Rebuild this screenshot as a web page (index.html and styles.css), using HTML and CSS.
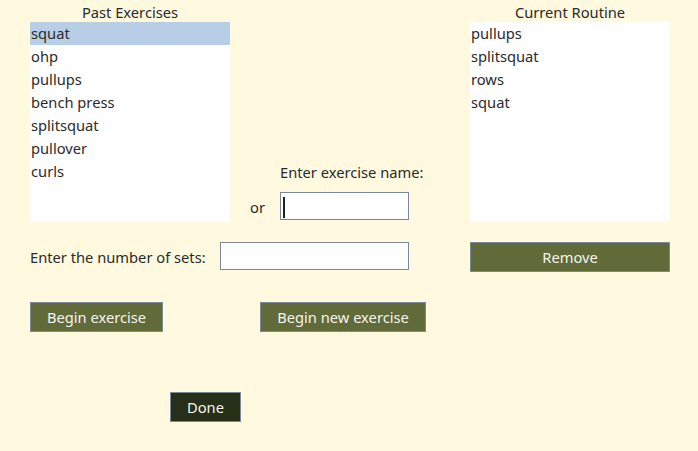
FILE: index.html
```html
<!DOCTYPE html>
<html>
<head>
<meta charset="utf-8">
<link rel="stylesheet" href="styles.css">
</head>
<body>
<div class="app">
  <div class="top">
    <div class="panel">
      <div class="title">Past Exercises</div>
      <ul class="listbox">
        <li class="sel">squat</li>
        <li>ohp</li>
        <li>pullups</li>
        <li>bench press</li>
        <li>splitsquat</li>
        <li>pullover</li>
        <li>curls</li>
      </ul>
    </div>
    <div class="middle">
      <div class="name-label">Enter exercise name:</div>
      <div class="or-row">
        <span class="or">or</span>
        <div class="entry name-entry"><span class="caret"></span></div>
      </div>
    </div>
    <div class="panel">
      <div class="title">Current Routine</div>
      <ul class="listbox">
        <li>pullups</li>
        <li>splitsquat</li>
        <li>rows</li>
        <li>squat</li>
      </ul>
    </div>
  </div>
  <div class="sets-row">
    <span class="sets-label">Enter the number of sets:</span>
    <div class="entry sets-entry"></div>
    <button class="btn remove">Remove</button>
  </div>
  <div class="begin-row">
    <button class="btn begin">Begin exercise</button>
    <button class="btn begin-new">Begin new exercise</button>
  </div>
  <div class="done-row">
    <button class="btn done">Done</button>
  </div>
</div>
</body>
</html>
```
FILE: styles.css
```css
html, body {
  margin: 0;
  padding: 0;
  background: #fef9df;
  height: 100%;
}
body {
  font-family: "Noto Sans", "Open Sans", sans-serif;
  font-size: 14.7px;
  color: #2b2b2b;
}
.app {
  padding-left: 30px;
  width: 640px;
}
.top {
  display: flex;
  height: 222px;
}
.panel {
  width: 200px;
  display: flex;
  flex-direction: column;
}
.title {
  height: 22px;
  line-height: 25px;
  text-align: center;
}
.listbox {
  list-style: none;
  margin: 0;
  padding: 0;
  height: 200px;
  background: #ffffff;
}
.listbox li {
  height: 23px;
  line-height: 23px;
  padding-left: 1px;
}
.listbox li.sel {
  background: #b8cee6;
}
.middle {
  width: 240px;
  display: flex;
  flex-direction: column;
  justify-content: flex-end;
  padding-bottom: 2px;
  box-sizing: border-box;
}
.name-label {
  margin-left: 50px;
  line-height: 20px;
  margin-bottom: 10px;
}
.or-row {
  display: flex;
  align-items: center;
}
.or {
  margin-left: 20px;
  width: 30px;
  line-height: 20px;
  padding-top: 2px;
}
.entry {
  background: #ffffff;
  border: 1px solid #7a8798;
  box-sizing: border-box;
  height: 28px;
  position: relative;
}
.name-entry {
  width: 129px;
}
.caret {
  position: absolute;
  left: 2px;
  top: 4px;
  width: 2px;
  height: 21px;
  background: #222222;
}
.sets-row {
  display: flex;
  align-items: flex-start;
  margin-top: 20px;
  height: 30px;
}
.sets-label {
  width: 190px;
  line-height: 30px;
}
.sets-entry {
  width: 189px;
}
.btn {
  font-family: inherit;
  font-size: 14.7px;
  color: #f4f4ec;
  background: #616b3a;
  border: 1px solid #7a8a9a;
  height: 30px;
  padding: 0;
  margin: 0;
  box-sizing: border-box;
  text-align: center;
}
.remove {
  width: 200px;
  margin-left: 61px;
}
.begin-row {
  display: flex;
  margin-top: 30px;
}
.begin {
  width: 133px;
}
.begin-new {
  width: 166px;
  margin-left: 97px;
}
.done-row {
  display: flex;
  margin-top: 60px;
}
.done {
  width: 71px;
  margin-left: 140px;
  background: #263018;
}
```
